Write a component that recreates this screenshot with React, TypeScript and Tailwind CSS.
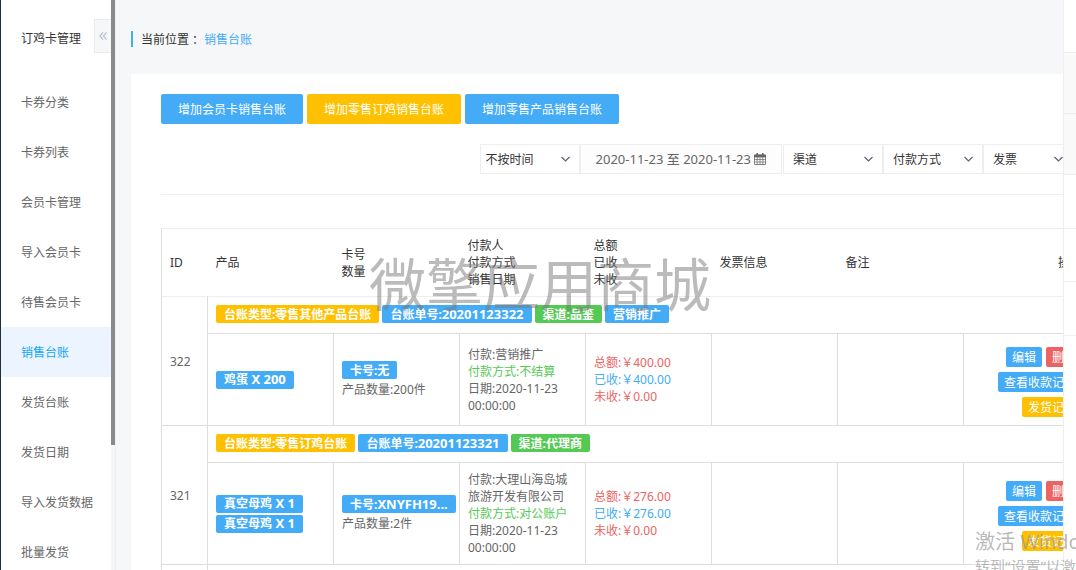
import React, { useState } from 'react';
import clsx from 'clsx';

const MENU = ['卡券分类', '卡券列表', '会员卡管理', '导入会员卡', '待售会员卡', '销售台账', '发货台账', '发货日期', '导入发货数据', '批量发货'];

const COLORS = {
    blue: 'bg-[#44abf7]',
    yellow: 'bg-[#ffc000]',
    green: 'bg-[#54c954]',
    red: 'bg-[#ec6363]',
};

type Color = keyof typeof COLORS;

interface TagData {
    color: Color;
    label: string;
    latin?: string;
}

interface Ledger {
    id: number;
    tags: TagData[];
    products: TagData[];
    card: TagData;
    count: string;
    payer: string;
    payment: string;
    date: string;
    total: string;
    received: string;
    unpaid: string;
}

const LEDGERS: Ledger[] = [
    {
        id: 322,
        tags: [
            { color: 'yellow', label: '台账类型:零售其他产品台账' },
            { color: 'blue', label: '台账单号:', latin: '20201123322' },
            { color: 'green', label: '渠道:品鉴' },
            { color: 'blue', label: '营销推广' },
        ],
        products: [{ color: 'blue', label: '鸡蛋', latin: ' X 200' }],
        card: { color: 'blue', label: '卡号:无' },
        count: '200件',
        payer: '营销推广',
        payment: '不结算',
        date: '2020-11-23 00:00:00',
        total: '400.00',
        received: '400.00',
        unpaid: '0.00',
    },
    {
        id: 321,
        tags: [
            { color: 'yellow', label: '台账类型:零售订鸡台账' },
            { color: 'blue', label: '台账单号:', latin: '20201123321' },
            { color: 'green', label: '渠道:代理商' },
        ],
        products: [
            { color: 'blue', label: '真空母鸡', latin: ' X 1' },
            { color: 'blue', label: '真空母鸡', latin: ' X 1' },
        ],
        card: { color: 'blue', label: '卡号:', latin: 'XNYFH19...' },
        count: '2件',
        payer: '大理山海岛城旅游开发有限公司',
        payment: '对公账户',
        date: '2020-11-23 00:00:00',
        total: '276.00',
        received: '276.00',
        unpaid: '0.00',
    },
];

const Tag: React.FC<TagData> = ({ color, label, latin }) => (
    <span className={clsx('inline-flex h-[18px] items-center whitespace-pre rounded-xs px-2 font-bold text-white', COLORS[color])}>
        {label}
        {latin && <span className="text-[13px]">{latin}</span>}
    </span>
);

const SmallButton: React.FC<{ color: Color; children: React.ReactNode }> = ({ color, children }) => (
    <button className={clsx('mt-[5px] h-5 rounded-xs px-1.5 text-white', COLORS[color])}>{children}</button>
);

const AddButton: React.FC<{ color: Color; children: React.ReactNode }> = ({ color, children }) => (
    <button className={clsx('h-[30px] rounded-xs px-[17px] text-white', COLORS[color])}>{children}</button>
);

const Filter: React.FC<{ label: string; className: string }> = ({ label, className }) => (
    <div className="relative">
        <select aria-label={label} className={clsx('h-[30px] appearance-none border border-[#eee] bg-white pt-px text-[#333]', className)}>
            <option>{label}</option>
        </select>
        <svg className="pointer-events-none absolute right-2.5 top-3 h-[6px] w-[9px] text-[#566178]" viewBox="0 0 9 6" fill="none" stroke="currentColor" strokeWidth="1.2">
            <path d="M.5 1l4 4 4-4" />
        </svg>
    </div>
);

const CalendarIcon: React.FC = () => (
    <svg className="size-3" viewBox="0 0 12 12" fill="none" stroke="currentColor" strokeWidth="0.8">
        <path d="M.5 2h11v9.5H.5z" />
        <path d="M.5 2h11v2H.5z" fill="currentColor" />
        <path d="M3.2 4v7.5M6 4v7.5M8.8 4v7.5M.5 6.5h11M.5 9h11" strokeWidth="0.7" />
        <path d="M3.2 0v3M8.8 0v3" strokeWidth="1.5" />
    </svg>
);

const Sidebar: React.FC = () => {
    const [active, setActive] = useState('销售台账');

    return (
        <aside className="flex shrink-0 border-l border-[#1f2d3d] bg-white">
            <div className="w-[110px]">
                <div className="flex h-[77px] items-start justify-between pl-5">
                    <h1 className="pt-[30px] text-[#333]">订鸡卡管理</h1>
                    <button className="mt-[19px] flex h-[34px] w-[17px] items-center justify-center border border-r-0 border-[#eaecee] bg-[#f5f7f9] text-[#b4bfcb]" aria-label="收起">
                        <svg className="size-2" viewBox="0 0 9 9" fill="none" stroke="currentColor" strokeWidth="1.3">
                            <path d="M4.5 .5 1 4.5l3.5 4M8.5 .5 5 4.5l3.5 4" />
                        </svg>
                    </button>
                </div>
                <nav>
                    {MENU.map((item) => (
                        <a
                            key={item}
                            href="#"
                            onClick={() => setActive(item)}
                            className={clsx('flex h-[50px] items-center pl-5', item === active ? 'bg-[#ecf5ff] text-[#0fa5fa]' : 'text-[#666]')}
                        >
                            {item}
                        </a>
                    ))}
                </nav>
            </div>
            <div className="w-[5px] border-r border-[#eee] bg-[#f5f5f5]">
                <div className="h-[78%] w-1 bg-[#8a8a8a]" />
            </div>
        </aside>
    );
};

const LedgerRows: React.FC<{ ledger: Ledger }> = ({ ledger }) => (
    <>
        <tr>
            <td rowSpan={2} className="border-x border-b border-[#ddd] p-2">{ledger.id}</td>
            <td colSpan={7} className="border-x border-b border-[#ddd] p-2">
                <div className="flex h-5 items-start gap-[3px]">
                    {ledger.tags.map((tag) => <Tag key={tag.label} {...tag} />)}
                </div>
            </td>
        </tr>
        <tr>
            <td className="border border-[#ddd] p-2">
                <div className="flex flex-col items-start gap-0.5">
                    {ledger.products.map((product, i) => <Tag key={i} {...product} />)}
                </div>
            </td>
            <td className="border border-[#ddd] p-2">
                <div className="mb-0.5 flex"><Tag {...ledger.card} /></div>
                产品数量:{ledger.count}
            </td>
            <td className="border border-[#ddd] p-2">
                <p>付款:{ledger.payer}</p>
                <p className="text-[#54c954]">付款方式:{ledger.payment}</p>
                <p>日期:{ledger.date}</p>
            </td>
            <td className="border border-[#ddd] p-2">
                <p className="text-[#ec6363]">总额:￥{ledger.total}</p>
                <p className="text-[#44abf7]">已收:￥{ledger.received}</p>
                <p className="text-[#ec6363]">未收:￥{ledger.unpaid}</p>
            </td>
            <td className="border border-[#ddd] p-2" />
            <td className="border border-[#ddd] p-2" />
            <td className="border border-[#ddd] p-2">
                <div className="flex flex-col items-end">
                    <div className="flex gap-1">
                        <SmallButton color="blue">编辑</SmallButton>
                        <SmallButton color="red">删除</SmallButton>
                    </div>
                    <SmallButton color="blue">查看收款记录</SmallButton>
                    <SmallButton color="yellow">发货记录</SmallButton>
                </div>
            </td>
        </tr>
    </>
);

const LedgerTable: React.FC = () => (
    <table className="mt-[33px] w-full table-fixed border-collapse border-x border-[#ddd]">
        <colgroup>
            <col className="w-[46px]" />
            <col className="w-[126px]" />
            <col className="w-[126px]" />
            <col className="w-[126px]" />
            <col className="w-[126px]" />
            <col className="w-[126px]" />
            <col className="w-[126px]" />
            <col />
        </colgroup>
        <thead>
            <tr className="border-y border-[#eee] text-left text-[#333]">
                <th className="p-2 font-normal">ID</th>
                <th className="p-2 font-normal">产品</th>
                <th className="p-2 font-normal">卡号<br />数量</th>
                <th className="p-2 font-normal">付款人<br />付款方式<br />销售日期</th>
                <th className="p-2 font-normal">总额<br />已收<br />未收</th>
                <th className="p-2 font-normal">发票信息</th>
                <th className="p-2 font-normal">备注</th>
                <th className="p-2 text-right font-normal">操作</th>
            </tr>
        </thead>
        <tbody>
            {LEDGERS.map((ledger) => <LedgerRows key={ledger.id} ledger={ledger} />)}
            <tr>
                <td className="h-9 border border-[#ddd]" />
                <td colSpan={7} className="border border-[#ddd]" />
            </tr>
        </tbody>
    </table>
);

const RightPanel: React.FC = () => (
    <aside className="w-[13px] shrink-0 border-l border-[#eee] bg-white">
        <div className="h-[52px]" />
        <div className="h-[61px] border-t border-[#eee] bg-[#f9f9f9]" />
        <div className="h-[62px] border-y border-[#eee] bg-[#f9f9f9]" />
        <div className="h-[53px]" />
        <div className="h-[53px] border-t border-[#f0f0f0]" />
        <div className="h-[55px] border-y border-[#f0f0f0]" />
    </aside>
);

const App: React.FC = () => {
    return (
        <div className="relative flex h-screen overflow-hidden bg-[#f5f7f9] font-['Noto_Sans','Noto_Sans_CJK_SC',sans-serif] text-[12px] leading-[17px] text-[#666]">
            <Sidebar />
            <main className="min-w-0 flex-1 overflow-hidden pl-[15px]">
                <div className="flex h-[74px] items-center pt-1">
                    <div className="flex h-4 items-center border-l-2 border-[#44abf7] pl-2 text-[#333]">
                        当前位置<span className="font-['Noto_Sans_CJK_TC',sans-serif]">：</span>
                        <a href="#" className="ml-[3px] text-[#44abf7]">销售台账</a>
                    </div>
                </div>
                <section className="min-w-[990px] bg-white px-[30px] pt-5">
                    <div className="flex gap-1">
                        <AddButton color="blue">增加会员卡销售台账</AddButton>
                        <AddButton color="yellow">增加零售订鸡销售台账</AddButton>
                        <AddButton color="blue">增加零售产品销售台账</AddButton>
                    </div>
                    <div className="flex justify-end border-b border-[#eee] py-5 pr-[18px]">
                        <Filter label="不按时间" className="w-[100px] pl-[5px]" />
                        <button className="mr-px flex h-[30px] items-center gap-[3px] border border-[#eee] bg-[#fdfdfd] px-[15px] text-[13px]">
                            2020-11-23 至 2020-11-23
                            <CalendarIcon />
                        </button>
                        <Filter label="渠道" className="w-[100px] pl-[9px]" />
                        <Filter label="付款方式" className="w-[100px] pl-[9px]" />
                        <Filter label="发票" className="w-[90px] pl-[9px]" />
                    </div>
                    <LedgerTable />
                </section>
            </main>
            <RightPanel />
            <div className="pointer-events-none absolute left-[369px] top-[256px] whitespace-nowrap text-[57px] leading-[56px] text-[#777]/50">
                微擎应用商城
            </div>
            <div className="pointer-events-none absolute left-[975px] top-[530px] whitespace-nowrap text-[#999]/70">
                <p className="text-[20px] leading-6">激活 Windows</p>
                <p className="text-[15px] leading-6">转到“设置”以激活</p>
            </div>
        </div>
    );
};

export default App;
